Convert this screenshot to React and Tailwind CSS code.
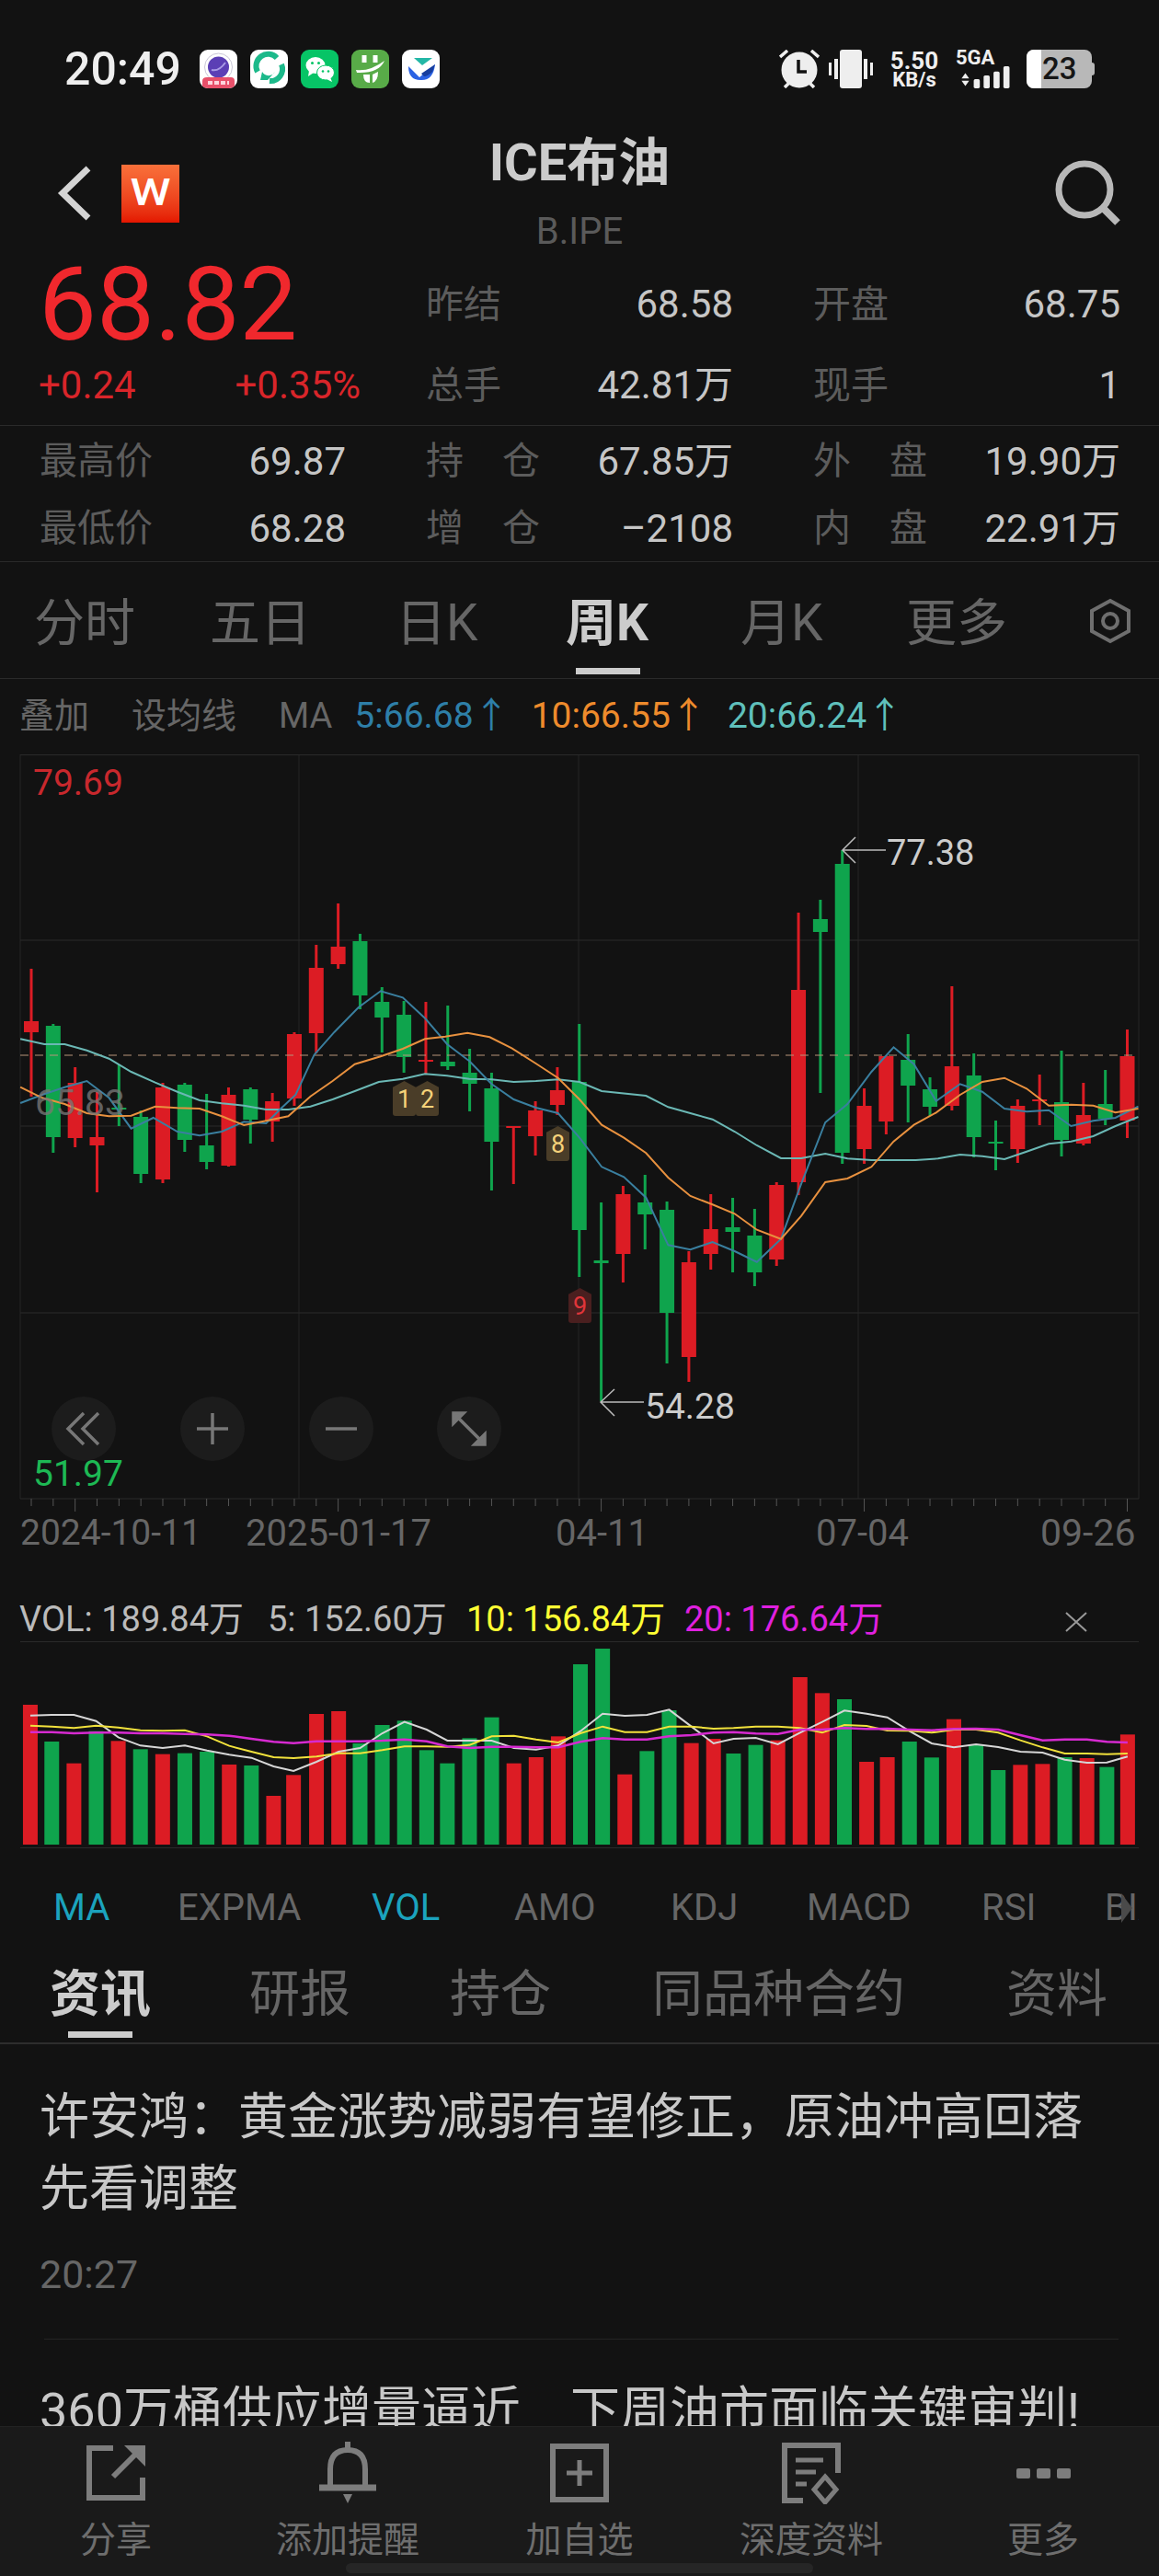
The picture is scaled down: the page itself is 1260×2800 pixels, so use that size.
import React from "react";

/* ============================================================
   ICE BRENT – WEEKLY K-LINE SCREEN
============================================================ */

/* ============================================================
   CHART DATA (page pixels)
============================================================ */

const RED = "#dc1c24";
const GREEN = "#0fa44d";

// [up, high, bodyTop, bodyBottom, low]
const candles = [
  [1, 1053, 1110, 1122, 1192], [0, 1113, 1115, 1236, 1253], [1, 1160, 1177, 1237, 1247],
  [1, 1187, 1236, 1245, 1296], [0, 1157, 1204, 1206, 1224], [0, 1207, 1214, 1276, 1286],
  [1, 1177, 1182, 1282, 1286], [0, 1177, 1179, 1239, 1252], [0, 1189, 1245, 1263, 1271],
  [1, 1182, 1190, 1267, 1268], [0, 1182, 1184, 1217, 1243], [1, 1188, 1197, 1219, 1241],
  [1, 1122, 1124, 1194, 1202], [1, 1027, 1052, 1123, 1145], [1, 982, 1029, 1048, 1053],
  [0, 1015, 1023, 1082, 1097], [0, 1073, 1089, 1106, 1144], [0, 1088, 1103, 1149, 1166],
  [1, 1089, 1152, 1154, 1167], [0, 1093, 1154, 1159, 1163], [0, 1140, 1166, 1178, 1208],
  [0, 1166, 1183, 1241, 1294], [1, 1224, 1224, 1226, 1287], [1, 1197, 1207, 1235, 1256],
  [1, 1160, 1185, 1201, 1212], [0, 1113, 1176, 1337, 1388], [0, 1307, 1370, 1373, 1523],
  [1, 1289, 1298, 1363, 1394], [0, 1277, 1307, 1320, 1358], [0, 1306, 1315, 1427, 1482],
  [1, 1360, 1372, 1475, 1502], [1, 1298, 1336, 1363, 1380], [0, 1302, 1334, 1339, 1383],
  [0, 1314, 1343, 1383, 1398], [1, 1285, 1288, 1369, 1376], [1, 992, 1076, 1285, 1299],
  [0, 978, 999, 1013, 1188], [0, 924, 939, 1253, 1265], [1, 1183, 1202, 1249, 1265],
  [1, 1147, 1148, 1219, 1233], [0, 1124, 1152, 1180, 1220], [0, 1171, 1184, 1203, 1213],
  [1, 1072, 1159, 1202, 1207], [0, 1145, 1169, 1236, 1258], [0, 1218, 1241, 1243, 1272],
  [1, 1195, 1202, 1249, 1264], [1, 1168, 1195, 1197, 1223], [0, 1142, 1198, 1239, 1257],
  [1, 1177, 1212, 1243, 1245], [0, 1163, 1200, 1216, 1223], [1, 1119, 1148, 1218, 1237],
];

// readings were taken from crops, so convert crop coords to page pixels
const crop = (x0, y0) => (pts) => pts.map(([x, y]) => [x0 + x / 2.489, y0 + y / 3]);
const leftTop = crop(0, 820);
const leftBottom = crop(0, 1200);
const rightTop = crop(630, 820);
const rightBottom = crop(630, 1200);

const ma5 = [
  ...leftTop([[55, 1137], [114, 1110], [175, 1085], [235, 1065], [295, 1120]]),
  ...leftBottom([[355, 80], [415, 45], [480, 90], [540, 103], [600, 90], [660, 58], [720, 63]]),
  ...leftTop([[760, 1155], [800, 1110], [850, 980], [905, 905], [970, 825], [1030, 772], [1090, 793],
    [1150, 860], [1210, 945], [1270, 1000], [1330, 1075], [1390, 1125], [1450, 1152], [1510, 1170]]),
  ...leftBottom([[1568, 110]]),
  ...rightBottom([[60, 205], [120, 238], [180, 305], [240, 460], [300, 475], [360, 450], [420, 480],
    [480, 515], [545, 440], [600, 260], [665, 60]]),
  ...rightTop([[725, 1140], [790, 1035], [850, 955], [905, 1010], [965, 1130], [1030, 1075], [1090, 1100],
    [1150, 1155], [1210, 1165], [1270, 1160]]),
  ...rightBottom([[1330, 72], [1390, 55], [1450, 45], [1512, 8]]),
];

const ma10 = [
  ...leftTop([[55, 1085], [114, 1120], [175, 1140], [235, 1170], [295, 1180], [355, 1178], [420, 1148],
    [480, 1153], [540, 1155], [600, 1180], [660, 1209], [720, 1195], [780, 1180], [840, 1115], [900, 1065],
    [960, 1010], [1030, 985], [1090, 960], [1150, 928], [1205, 920], [1265, 908], [1325, 922], [1385, 958],
    [1450, 1008], [1510, 1055], [1568, 1125]]),
  ...rightBottom([[60, 68], [120, 110], [180, 160], [240, 240], [300, 300], [360, 328], [420, 358], [480, 410],
    [545, 440], [600, 365], [665, 255], [725, 243], [790, 205], [850, 122], [905, 68], [965, 28]]),
  ...rightTop([[1030, 1110], [1090, 1068], [1150, 1055], [1210, 1090], [1270, 1145], [1330, 1142], [1390, 1145],
    [1450, 1168], [1512, 1155]]),
];

const ma20 = [
  ...leftTop([[55, 928], [120, 945], [175, 945], [235, 965], [295, 992], [355, 1035], [420, 1070], [480, 1100],
    [540, 1128], [600, 1138], [660, 1145], [720, 1158], [780, 1158], [840, 1148], [900, 1125], [960, 1098],
    [1025, 1068], [1090, 1058], [1150, 1042], [1210, 1048], [1270, 1058], [1330, 1060], [1390, 1068],
    [1450, 1065], [1510, 1060], [1568, 1068]]),
  ...rightTop([[60, 1098], [180, 1113], [240, 1150], [300, 1170], [360, 1190]]),
  ...rightBottom([[420, 90], [480, 135], [545, 177], [600, 177], [665, 162], [725, 178], [790, 183], [850, 183],
    [910, 183], [970, 178], [1030, 165], [1090, 170], [1150, 180], [1210, 155], [1270, 130], [1330, 122],
    [1390, 105], [1450, 72], [1512, 42]]),
];

// [up, top in crop pixels]
const volumes = [
  [1, 519], [0, 639], [1, 710], [0, 605], [1, 637], [0, 664], [1, 680], [0, 677], [0, 672], [1, 714],
  [0, 717], [1, 816], [1, 748], [1, 549], [1, 540], [0, 645], [0, 585], [0, 571], [0, 667], [0, 710],
  [0, 628], [0, 560], [1, 710], [1, 690], [1, 622], [0, 387], [0, 336], [1, 746], [0, 670], [0, 537],
  [1, 644], [1, 630], [0, 678], [0, 650], [1, 635], [1, 429], [1, 481], [0, 501], [1, 705], [1, 690],
  [0, 639], [0, 691], [1, 566], [0, 648], [0, 732], [1, 715], [1, 712], [0, 690], [1, 693], [0, 722], [1, 616],
];

const volX = [41, 70, 100, 130, 160, 190, 220, 250, 280, 310, 340, 370, 397, 428, 458, 487, 517, 547, 577, 605,
  635, 665, 695, 725, 755, 785, 815, 845, 875, 905, 935, 965, 992, 1022, 1052, 1082, 1112, 1142, 1172, 1200,
  1230, 1260, 1290, 1320, 1350, 1380, 1410, 1440, 1470, 1497, 1525];

const volWhite = [554, 552, 552, 572, 625, 652, 660, 652, 668, 682, 692, 720, 735, 705, 672, 660, 612, 575, 600, 636,
  636, 636, 660, 665, 652, 605, 548, 555, 552, 535, 590, 645, 630, 627, 648, 610, 575, 538, 548, 560,
  605, 645, 658, 648, 657, 672, 675, 698, 708, 707, 688];
const volYellow = [587, 590, 595, 587, 593, 602, 604, 602, 622, 653, 672, 690, 693, 688, 677, 677, 667, 655, 655, 656,
  650, 622, 620, 632, 642, 612, 590, 608, 608, 590, 590, 597, 595, 590, 590, 595, 610, 585, 588, 603,
  604, 610, 600, 600, 610, 635, 658, 678, 678, 680, 678];
const volPink = [608, 608, 612, 610, 610, 612, 612, 614, 616, 620, 630, 640, 644, 638, 638, 638, 636, 632, 638, 655,
  660, 656, 656, 658, 658, 640, 628, 632, 632, 622, 618, 610, 608, 613, 614, 600, 600, 595, 598, 597,
  600, 602, 598, 597, 600, 618, 635, 632, 632, 640, 642];

const volPoints = (ys) =>
  ys.map((y, i) => `${volX[i] / 1.244},${y / 3 + 1680}`).join(" ");

const linePoints = (pts) => pts.map(([x, y]) => `${x.toFixed(1)},${y.toFixed(1)}`).join(" ");

/* ============================================================
   STATUS BAR ICONS
============================================================ */

function CameraApp() {
  return (
    <svg width="41" height="42" viewBox="0 0 41 42" className="rounded-[9px] bg-white">
      <circle cx="20.5" cy="19" r="15" fill="none" stroke="#c9c6d6" strokeWidth="1" />
      <circle cx="20.5" cy="19" r="11.5" fill="#5b3fb5" />
      <path d="M13 22 Q21 24 28 14" fill="none" stroke="#a99be6" strokeWidth="2" />
      <path d="M3 34 Q3 30 8 30 H34 Q38 30 38 34 V42 H3 Z" fill="#e8506a" />
      <path d="M9 36 H32" stroke="#ffd4dc" strokeWidth="4" strokeDasharray="5 2" />
    </svg>
  );
}

function SwirlApp() {
  return (
    <svg width="41" height="42" viewBox="0 0 41 42" className="rounded-[9px] bg-white">
      <path d="M8 24 A13 13 0 0 1 29 9" fill="none" stroke="#1cb98a" strokeWidth="6" />
      <path d="M34 16 A13 13 0 0 1 21 34" fill="none" stroke="#1cb98a" strokeWidth="6" />
      <path d="M27 24 A8 8 0 0 1 13 24 L11 33 L19 33" fill="#1cb98a" />
    </svg>
  );
}

function WechatApp() {
  return (
    <svg width="41" height="42" viewBox="0 0 41 42" className="rounded-[9px] bg-[#07c466]">
      <ellipse cx="16" cy="17" rx="10.5" ry="9" fill="white" />
      <path d="M9 23 L8 29 L14 25 Z" fill="white" />
      <circle cx="12.5" cy="14.5" r="1.5" fill="#07c466" />
      <circle cx="19.5" cy="14.5" r="1.5" fill="#07c466" />
      <ellipse cx="27" cy="25" rx="9.5" ry="8" fill="white" stroke="#07c466" strokeWidth="1" />
      <path d="M32 30 L34 35 L28 32 Z" fill="white" />
      <circle cx="24" cy="23.5" r="1.3" fill="#07c466" />
      <circle cx="30" cy="23.5" r="1.3" fill="#07c466" />
    </svg>
  );
}

function GreenApp() {
  return (
    <svg width="41" height="42" viewBox="0 0 41 42" className="rounded-[9px] bg-[#58ab48]">
      <path d="M14 6 V14 M26 6 V14" stroke="white" strokeWidth="5" />
      <path d="M5 22 Q20 24 36 12 Q30 26 6 25 Z" fill="white" />
      <path d="M13 27 Q13 36 20 36 V27 Z M23 27 V36 Q29 34 29 24 Z" fill="white" />
    </svg>
  );
}

function BlueApp() {
  return (
    <svg width="41" height="42" viewBox="0 0 41 42" className="rounded-[9px] bg-white">
      <path d="M7 18 L19 30 L36 16 Q34 34 20 33 Q7 33 7 18 Z" fill="#2b62e3" />
      <path d="M13 9 H33 L22 17 Z" fill="#23b7a6" />
      <path d="M21 26 L36 16 L33 24 Q28 29 24 29 Z" fill="#173e9e" />
    </svg>
  );
}

function AlarmIcon() {
  return (
    <svg width="44" height="42" viewBox="0 0 44 42" className="ml-[-1px]">
      <circle cx="22" cy="22" r="19.5" fill="#eeeeee" />
      <path d="M1 8 L9 1 M43 8 L35 1" stroke="#eeeeee" strokeWidth="3.5" />
      <path d="M6 41 L11 36 M38 41 L33 36" stroke="#eeeeee" strokeWidth="3.5" />
      <path d="M21 11 V24 H30" fill="none" stroke="#121212" strokeWidth="3.5" />
    </svg>
  );
}

function VibrateIcon() {
  return (
    <svg width="50" height="42" viewBox="0 0 50 42">
      <rect x="13" y="0" width="24" height="42" rx="3" fill="#eeeeee" />
      <rect x="1" y="14" width="3" height="14" fill="#eeeeee" />
      <rect x="7" y="10" width="4" height="22" fill="#eeeeee" />
      <rect x="39" y="10" width="4" height="22" fill="#eeeeee" />
      <rect x="46" y="14" width="3" height="14" fill="#eeeeee" />
    </svg>
  );
}

function SignalIcon() {
  return (
    <svg width="64" height="29" viewBox="0 0 64 29" className="block">
      <path d="M1 11 L6 4 L11 11 Z M1 14 H11 L6 21 Z" fill="#eeeeee" transform="translate(0 5)" />
      <rect x="17" y="17" width="8" height="12" rx="2" fill="#eeeeee" />
      <rect x="30" y="12" width="8" height="17" rx="2" fill="#eeeeee" />
      <rect x="43" y="7" width="8" height="22" rx="2" fill="#eeeeee" />
      <rect x="56" y="0" width="8" height="29" rx="2" fill="#eeeeee" />
    </svg>
  );
}

/* ============================================================
   STATUS BAR
============================================================ */

function StatusBar() {
  return (
    <div className="mt-[54px] h-[42px] flex items-center text-[#eeeeee]">
      <div className="ml-[70px] w-[147px] text-[50px] leading-none font-medium">20:49</div>
      <div className="flex gap-[14px]">
        <CameraApp />
        <SwirlApp />
        <WechatApp />
        <GreenApp />
        <BlueApp />
      </div>

      <div className="ml-[370px] flex items-center">
        <AlarmIcon />
        <div className="ml-[9px]">
          <VibrateIcon />
        </div>
        <div className="ml-[18px] w-[52px] flex flex-col items-center font-bold leading-none">
          <span className="text-[26px] h-[24px] leading-[24px]">5.50</span>
          <span className="text-[22px] h-[18px] leading-[18px]">KB/s</span>
        </div>
        <div className="ml-[19px] w-[64px] h-[42px] flex flex-col justify-between">
          <span className="text-[22px] leading-[18px] font-bold">5GA</span>
          <SignalIcon />
        </div>
        <div className="ml-[13px] relative w-[71px] h-[42px] rounded-[8px] bg-[#b8b8b8] overflow-hidden flex">
          <div className="w-[16px] bg-white" />
          <span className="ml-[1px] text-[33px] leading-[42px] font-medium text-[#161616]">23</span>
        </div>
        <div className="w-[3px] h-[14px] bg-[#b8b8b8] rounded-r" />
      </div>
    </div>
  );
}

/* ============================================================
   NAV BAR
============================================================ */

function NavBar() {
  return (
    <div className="mt-[44px] h-[140px] grid grid-cols-[1fr_auto_1fr]">
      <div className="pl-[62px] flex items-center gap-[32px]">
        <svg width="38" height="62" viewBox="0 0 38 62">
          <path d="M34 4 L6 31 L34 58" fill="none" stroke="#d4d4d4" strokeWidth="7" />
        </svg>
        <div className="w-[63px] h-[63px] flex items-center justify-center bg-linear-to-b from-[#f9703a] to-[#e41500]">
          <span className="text-[40px] leading-none font-medium text-white scale-x-125">W</span>
        </div>
      </div>

      <div className="flex flex-col items-center">
        <div className="mt-[3px] h-[68px] flex items-center text-[56px] font-bold text-[#cccccc]">ICE布油</div>
        <div className="mt-[17px] h-[48px] flex items-center text-[40px] text-[#5a5a5a]">B.IPE</div>
      </div>

      <div className="pr-[42px] flex items-center justify-end">
        <svg width="72" height="72" viewBox="0 0 72 72">
          <circle cx="33" cy="32" r="28" fill="none" stroke="#b8b8b8" strokeWidth="7" />
          <path d="M54 53 L69 68" stroke="#b8b8b8" strokeWidth="8" />
        </svg>
      </div>
    </div>
  );
}

/* ============================================================
   QUOTE
============================================================ */

function Label({ children }) {
  return <span className="text-[41px] text-[#5c5c5c]">{children}</span>;
}

function Stat({ label, value, spread }) {
  return (
    <div className="h-[73px] flex items-center justify-between">
      {spread ? (
        <span className="w-[124px] flex justify-between">
          <Label>{label[0]}</Label>
          <Label>{label[1]}</Label>
        </span>
      ) : (
        <Label>{label}</Label>
      )}
      <span className="text-[#c6c6c6]">{value}</span>
    </div>
  );
}

function Quote() {
  return (
    <>
      <div className="h-[183px] pt-[7px] pl-[43px] border-b border-[#2a2a2a] grid grid-cols-[333px_334px_334px] grid-rows-[88px_88px] gap-x-[87px] text-[42px] leading-none">
        <div className="h-[88px] ml-[-1px] flex items-center text-[112px] text-[#f0282d]">68.82</div>
        <div className="col-start-2 flex items-center justify-between">
          <Label>昨结</Label>
          <span className="text-[#c6c6c6]">68.58</span>
        </div>
        <div className="flex items-center justify-between">
          <Label>开盘</Label>
          <span className="text-[#c6c6c6]">68.75</span>
        </div>
        <div className="ml-[-1px] w-[350px] flex items-center justify-between text-[#d9252a]">
          <span>+0.24</span>
          <span>+0.35%</span>
        </div>
        <div className="flex items-center justify-between">
          <Label>总手</Label>
          <span className="text-[#c6c6c6]">42.81万</span>
        </div>
        <div className="flex items-center justify-between">
          <Label>现手</Label>
          <span className="text-[#c6c6c6]">1</span>
        </div>
      </div>

      <div className="h-[148px] pt-[2px] pl-[43px] border-b border-[#2a2a2a] grid grid-cols-[333px_334px_334px] gap-x-[87px] content-start text-[42px] leading-none">
        <Stat label="最高价" value="69.87" />
        <Stat label="持仓" value="67.85万" spread />
        <Stat label="外盘" value="19.90万" spread />
        <Stat label="最低价" value="68.28" />
        <Stat label="增仓" value="–2108" spread />
        <Stat label="内盘" value="22.91万" spread />
      </div>
    </>
  );
}

/* ============================================================
   PERIOD TABS + MA LEGEND
============================================================ */

function PeriodTabs() {
  return (
    <div className="h-[127px] pl-[37px] pt-[36px] border-b border-[#2a2a2a] grid grid-cols-[191px_202px_185px_190px_180px_199px_auto] items-start text-[55px] leading-[60px] text-[#666666]">
      <span>分时</span>
      <span>五日</span>
      <span>日K</span>
      <span className="relative font-bold text-[#cccccc]">
        周K
        <span className="absolute left-[11px] top-[79px] w-[70px] h-[7px] bg-[#cccccc]" />
      </span>
      <span>月K</span>
      <span>更多</span>
      <svg width="46" height="50" viewBox="0 0 46 50" className="mt-[3px]">
        <path d="M23 3 L43 14 V36 L23 47 L3 36 V14 Z" fill="none" stroke="#6e6e6e" strokeWidth="4" />
        <circle cx="23" cy="25" r="8" fill="none" stroke="#6e6e6e" strokeWidth="4" />
      </svg>
    </div>
  );
}

function MaLegend() {
  return (
    <div className="h-[82px] pb-[2px] pl-[21px] flex items-center text-[39px] leading-none">
      <span className="text-[38px] text-[#666666]">叠加</span>
      <span className="ml-[46px] text-[38px] text-[#666666]">设均线</span>
      <span className="ml-[46px] text-[38px] text-[#666666]">MA</span>
      <span className="ml-[24px] text-[#2e7fa8]">5:66.68↑</span>
      <span className="ml-[24px] text-[#ee8b2c]">10:66.55↑</span>
      <span className="ml-[23px] text-[#5fc0bb]">20:66.24↑</span>
    </div>
  );
}

/* ============================================================
   K-LINE CHART
============================================================ */

function KLineSvg() {
  const gridX = [22, 325, 629, 933, 1238];
  const gridY = [820.5, 1022, 1224, 1427, 1629];

  return (
    <svg width="1260" height="823" viewBox="0 820 1260 823" className="block">
      {gridX.map((x) => (
        <line key={x} x1={x} x2={x} y1="820" y2="1629" stroke="#252525" />
      ))}
      {gridY.map((y) => (
        <line key={y} x1="22" x2="1238" y1={y} y2={y} stroke="#2a2a2a" />
      ))}

      {candles.map(([up, high, top, bottom, low], i) => {
        const cx = 34 + i * 23.83;
        const color = up ? RED : GREEN;
        return (
          <g key={i} fill={color}>
            <rect x={cx - 1.5} y={high} width="3" height={low - high} />
            <rect x={cx - 8} y={top} width="16" height={bottom - top} />
            <rect x={cx - 0.5} y="1629" width="1" height={i % 12 === 2 ? 14 : 8} fill="#555555" />
          </g>
        );
      })}

      <line x1="22" x2="1238" y1="1147" y2="1147" stroke="#b8957a" strokeDasharray="9 7" />

      <polyline points={linePoints(ma20)} fill="none" stroke="#6bb8b5" strokeWidth="2" />
      <polyline points={linePoints(ma5)} fill="none" stroke="#3a7f9f" strokeWidth="2" />
      <polyline points={linePoints(ma10)} fill="none" stroke="#e8913f" strokeWidth="2" />

      <path d="M963 924 H916 M930 910 L916 924 L930 938" fill="none" stroke="#bbbbbb" strokeWidth="1.5" />
      <path d="M700 1524 H653 M668 1510 L653 1524 L668 1539" fill="none" stroke="#bbbbbb" strokeWidth="1.5" />
    </svg>
  );
}

function Badge({ children, className }) {
  return (
    <div className={`absolute w-[25px] h-[38px] pt-[3px] flex items-center justify-center text-[27px] leading-none rounded-b-[3px] [clip-path:polygon(0_18%,50%_0,100%_18%,100%_100%,0_100%)] ${className}`}>
      {children}
    </div>
  );
}

function RoundButton({ className, children }) {
  return (
    <div className={`absolute top-[698px] w-[70px] h-[70px] rounded-full bg-[#1c1c1c] flex items-center justify-center ${className}`}>
      <svg width="40" height="40" viewBox="0 0 40 40" fill="none" stroke="#777777" strokeWidth="3.5">
        {children}
      </svg>
    </div>
  );
}

function KLineChart() {
  return (
    <div className="relative">
      <KLineSvg />

      <span className="absolute left-[36px] top-[12px] text-[39px] leading-[38px] text-[#c8282d]">79.69</span>
      <span className="absolute left-[38px] top-[360px] text-[39px] leading-[38px] text-[#777777]/80">65.83</span>
      <span className="absolute left-[36px] top-[763px] text-[39px] leading-[38px] text-[#1db954]">51.97</span>
      <span className="absolute left-[964px] top-[88px] text-[38px] leading-[38px] text-[#cccccc]">77.38</span>
      <span className="absolute left-[701px] top-[690px] text-[39px] leading-[38px] text-[#cccccc]">54.28</span>

      <Badge className="left-[427px] top-[355px] bg-[#4a3d28] text-[#f5d27a]">1</Badge>
      <Badge className="left-[452px] top-[355px] bg-[#4a3d28] text-[#f5d27a]">2</Badge>
      <Badge className="left-[594px] top-[404px] bg-[#4a3d28] text-[#f5d27a]">8</Badge>
      <Badge className="left-[618px] top-[580px] bg-[#4a1f1f] text-[#e0353a]">9</Badge>

      <RoundButton className="left-[56px]">
        <path d="M20 3 L3 20 L20 37 M36 3 L19 20 L36 37" />
      </RoundButton>
      <RoundButton className="left-[196px]">
        <path d="M20 3 V37 M3 20 H37" />
      </RoundButton>
      <RoundButton className="left-[336px]">
        <path d="M3 20 H37" />
      </RoundButton>
      <RoundButton className="left-[475px]">
        <path d="M6 6 L34 34" />
        <path d="M3 14 V3 H14 Z M37 26 V37 H26 Z" fill="#777777" />
      </RoundButton>
    </div>
  );
}

function DateAxis() {
  return (
    <div className="h-[47px] pl-[22px] grid grid-cols-[245px_337px_283px_244px_auto] items-center text-[40px] leading-none text-[#666666]">
      <span className="text-[39px]">2024-10-11</span>
      <span>2025-01-17</span>
      <span>04-11</span>
      <span>07-04</span>
      <span className="text-[41px]">09-26</span>
    </div>
  );
}

/* ============================================================
   VOLUME
============================================================ */

function VolumeLegend() {
  return (
    <div className="h-[94px] pt-[46px] pl-[21px] grid grid-cols-[270px_216px_237px_413px_auto] items-center text-[38px] leading-none">
      <span className="text-[#bbbbbb]">VOL: 189.84万</span>
      <span className="text-[#bbbbbb]">5: 152.60万</span>
      <span className="text-[#ffff33]">10: 156.84万</span>
      <span className="text-[#e020e0]">20: 176.64万</span>
      <svg width="26" height="24" viewBox="0 0 26 24" className="mt-[6px]">
        <path d="M2 2 L24 22 M24 2 L2 22" stroke="#999999" strokeWidth="2" />
      </svg>
    </div>
  );
}

function VolumeChart() {
  return (
    <svg width="1260" height="226" viewBox="0 1784 1260 226" className="block">
      <line x1="22" x2="1238" y1="1784.5" y2="1784.5" stroke="#2a2a2a" />
      <line x1="22" x2="1238" y1="2008.5" y2="2008.5" stroke="#2a2a2a" />
      {volumes.map(([up, top], i) => {
        const y = top / 3 + 1680;
        return (
          <rect
            key={i}
            x={volX[i] / 1.244 - 8}
            y={y}
            width="16"
            height={2005 - y}
            fill={up ? RED : GREEN}
          />
        );
      })}
      <polyline points={volPoints(volWhite)} fill="none" stroke="#d6d6d6" strokeWidth="2" />
      <polyline points={volPoints(volYellow)} fill="none" stroke="#f2e23c" strokeWidth="2" />
      <polyline points={volPoints(volPink)} fill="none" stroke="#d62ad0" strokeWidth="2.5" />
    </svg>
  );
}

function IndicatorTabs() {
  return (
    <div className="relative h-[110px] pt-[16px] pl-[58px] w-[1238px] overflow-hidden">
      <div className="h-[96px] grid grid-cols-[135px_211px_155px_170px_148px_190px_134px_auto] items-center text-[40px] leading-none text-[#666666]">
        <span className="text-[#1ba3bd]">MA</span>
        <span>EXPMA</span>
        <span className="text-[#1ba3bd]">VOL</span>
        <span>AMO</span>
        <span>KDJ</span>
        <span>MACD</span>
        <span>RSI</span>
        <span>BIAS</span>
      </div>
      <svg width="14" height="36" viewBox="0 0 14 36" className="absolute left-[1218px] top-[46px]">
        <path d="M1 2 L13 18 L1 34 Z" fill="#4a4a4a" />
      </svg>
    </div>
  );
}

/* ============================================================
   SECTION TABS + NEWS
============================================================ */

function SectionTabs() {
  return (
    <div className="h-[102px] pl-[54px] border-b-2 border-[#2d2d2d] flex items-start text-[55px] leading-[94px] text-[#666666]">
      <span className="relative w-[217px] font-bold text-[#cccccc]">
        资讯
        <span className="absolute left-[20px] top-[88px] w-[70px] h-[7px] bg-[#cccccc]" />
      </span>
      <span className="w-[218px]">研报</span>
      <span className="w-[220px]">持仓</span>
      <span className="w-[385px]">同品种合约</span>
      <span>资料</span>
    </div>
  );
}

function News() {
  return (
    <div className="flex-1 min-h-0 overflow-hidden pl-[43px] pr-[44px] pt-[41px]">
      <div className="text-[54px] leading-[78px] text-[#c8c8c8]">
        许安鸿：黄金涨势减弱有望修正，原油冲高回落先看调整
      </div>
      <div className="mt-[23px] h-[60px] flex items-center text-[43px] text-[#666666]">20:27</div>
      <div className="mt-[40px] ml-[5px] h-px bg-[#242424]" />
      <div className="mt-[39px] text-[54px] leading-[77px] text-[#c8c8c8] whitespace-nowrap">
        360万桶供应增量逼近　下周油市面临关键审判!
      </div>
    </div>
  );
}

/* ============================================================
   BOTTOM BAR
============================================================ */

const footerItems = [
  {
    label: "分享",
    icon: (
      <svg width="66" height="62" viewBox="0 0 66 62" fill="none" stroke="#7d7d7d" strokeWidth="6">
        <path d="M30 4 H4 V58 H62 V36" />
        <path d="M30 35 L58 7" />
        <path d="M42 1 H65 V24 Z" fill="#7d7d7d" stroke="none" />
      </svg>
    ),
  },
  {
    label: "添加提醒",
    icon: (
      <svg width="64" height="68" viewBox="0 0 64 68" fill="none" stroke="#7d7d7d" strokeWidth="6">
        <path d="M32 0 V8" />
        <path d="M13 48 V30 Q13 9 32 9 Q51 9 51 30 V48" />
        <path d="M1 50 H63" strokeWidth="7" />
        <path d="M27 57 H37 L32 67 Z" fill="#7d7d7d" stroke="none" />
      </svg>
    ),
  },
  {
    label: "加自选",
    icon: (
      <svg width="64" height="64" viewBox="0 0 64 64" fill="none" stroke="#7d7d7d" strokeWidth="6">
        <rect x="3" y="3" width="58" height="58" />
        <path d="M32 18 V46 M18 32 H46" strokeWidth="5" />
      </svg>
    ),
  },
  {
    label: "深度资料",
    icon: (
      <svg width="66" height="68" viewBox="0 0 66 68" fill="none" stroke="#7d7d7d" strokeWidth="6">
        <path d="M62 34 V4 H4 V64 H24" />
        <path d="M16 20 H46 M16 33 H38 M16 46 H28" strokeWidth="5" />
        <path d="M48 38 L60 52 L48 66 L36 52 Z" strokeWidth="5" />
      </svg>
    ),
  },
  {
    label: "更多",
    icon: (
      <div className="flex gap-[7px]">
        <div className="w-[15px] h-[11px] rounded-[2px] bg-[#7d7d7d]" />
        <div className="w-[15px] h-[11px] rounded-[2px] bg-[#7d7d7d]" />
        <div className="w-[15px] h-[11px] rounded-[2px] bg-[#7d7d7d]" />
      </div>
    ),
  },
];

function BottomBar() {
  return (
    <div className="relative h-[163px] bg-[#1a1a1a] border-t border-[#222222] grid grid-cols-5 pt-[10px]">
      {footerItems.map((item) => (
        <div key={item.label} className="flex flex-col items-center">
          <div className="h-[80px] flex items-center justify-center">{item.icon}</div>
          <div className="mt-[3px] h-[60px] flex items-center text-[39px] leading-none text-[#6e6e6e]">
            {item.label}
          </div>
        </div>
      ))}
      <div className="absolute left-[376px] top-[148px] w-[508px] h-[11px] rounded-full bg-[#262626]" />
    </div>
  );
}

/* ============================================================
   PAGE
============================================================ */

export default function App() {
  return (
    <div className="w-[1260px] h-[2800px] overflow-hidden flex flex-col bg-[#121212] font-[family-name:Roboto,'Noto_Sans_CJK_SC',sans-serif]">
      <StatusBar />
      <NavBar />
      <Quote />
      <PeriodTabs />
      <MaLegend />
      <KLineChart />
      <DateAxis />
      <VolumeLegend />
      <VolumeChart />
      <IndicatorTabs />
      <SectionTabs />
      <News />
      <BottomBar />
    </div>
  );
}
